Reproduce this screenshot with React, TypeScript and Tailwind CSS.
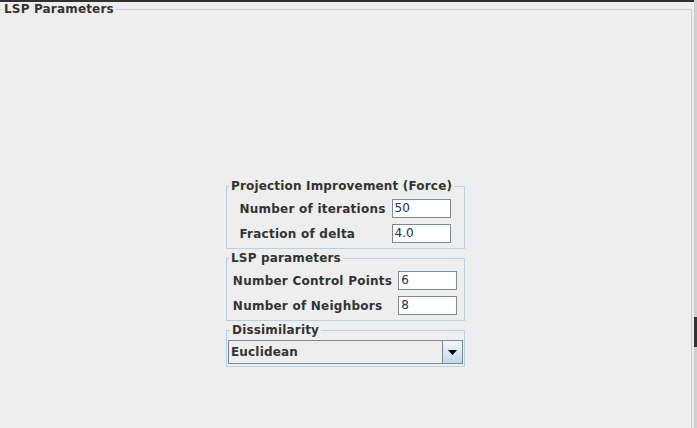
import { FC, ReactNode } from "react";

const Panel: FC<{ title: string; children: ReactNode; pad: string }> = ({ title, children, pad }) => {
    return <fieldset className={`w-[239px] border border-[#b8cfe5] ${pad}`}>
        <legend className="ml-[2px] px-[2px] leading-[14px] font-bold tracking-[0.17px]">{title}</legend>
        {children}
    </fieldset>
}

const Field: FC<{ value: string }> = ({ value }) => {
    return <div className="h-[19px] w-[59px] border border-[#7a8a99] bg-white pl-[2px] font-normal leading-[17px] tracking-normal text-[#1f2f4d]">{value}</div>
}

export default function App() {
    return <div className="flex h-[428px] w-[697px] overflow-hidden bg-[#eeeeee] font-['DejaVu_Sans',sans-serif] text-[12px] tracking-[0.24px] text-[#333333]">
        <div className="flex flex-1 flex-col">
            {/* window top edge */}
            <div className="h-[2px] bg-[#2f302f]" />
            <fieldset className="mr-[2px] flex-1 border border-b-0 border-l-0 border-[#b8cfe5]">
                <legend className="ml-[2px] px-[2px] leading-[14px] font-bold tracking-[0.17px]">LSP Parameters</legend>
                <div className="flex flex-col items-center gap-[2px] pt-[163px]">
                    {/* force */}
                    <Panel title="Projection Improvement (Force)" pad="pt-[6px] pb-[5px]">
                        <div className="flex justify-center pr-[1px]">
                            <div className="grid grid-cols-[auto_59px] items-center gap-x-[6px] gap-y-[6px] font-bold">
                                <span>Number of iterations</span>
                                <Field value="50" />
                                <span>Fraction of delta</span>
                                <Field value="4.0" />
                            </div>
                        </div>
                    </Panel>
                    {/* lsp */}
                    <Panel title="LSP parameters" pad="pt-[6px] pb-[5px]">
                        <div className="flex justify-center pr-[1px]">
                            <div className="grid grid-cols-[auto_59px] items-center gap-x-[6px] gap-y-[6px] font-bold">
                                <span>Number Control Points</span>
                                <Field value="6" />
                                <span>Number of Neighbors</span>
                                <Field value="8" />
                            </div>
                        </div>
                    </Panel>
                    {/* dissimilarity */}
                    <Panel title="Dissimilarity" pad="pt-[3px] pb-[2px] px-[1px]">
                        <div className="flex h-[24px] border border-[#7a8a99] bg-[#eeeeee]">
                            <span className="flex-1 pl-[2px] font-bold leading-[22px] tracking-[0.17px]">Euclidean</span>
                            <div className="flex w-[20px] items-center justify-center border-l border-[#7a8a99] bg-gradient-to-b from-[#f2f6fa] to-[#c4d7ea]">
                                <svg width="9" height="5" viewBox="0 0 9 5"><path d="M0 0h9L4.5 5z" fill="#000" /></svg>
                            </div>
                        </div>
                    </Panel>
                </div>
            </fieldset>
        </div>
        {/* scroll strip */}
        <div className="flex w-[3px] flex-col bg-[#cfcfcf] pt-[317px]">
            <div className="h-[30px] bg-[#333333]" />
        </div>
    </div>
}
